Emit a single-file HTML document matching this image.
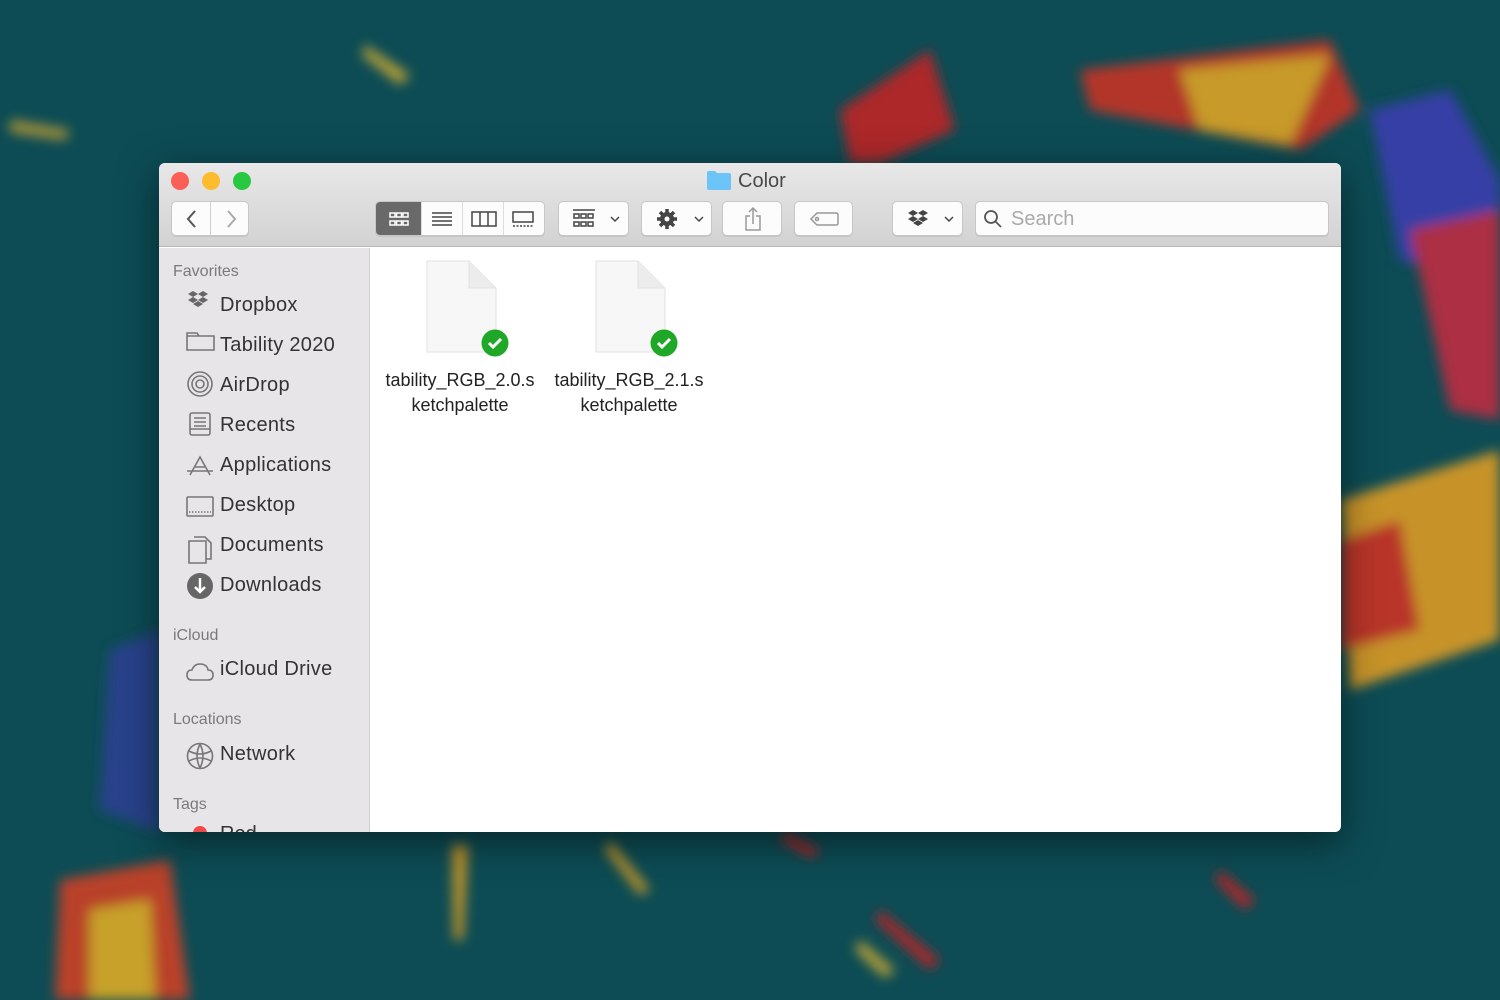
<!DOCTYPE html>
<html><head><meta charset="utf-8"><style>
*{margin:0;padding:0;box-sizing:border-box}
body{width:1500px;height:1000px;overflow:hidden;background:#0d4c55;font-family:"Liberation Sans",sans-serif;position:relative}
.win{position:absolute;left:159px;top:163px;width:1182px;height:669px;border-radius:6px;overflow:hidden;background:#fff;box-shadow:0 10px 40px rgba(0,0,0,.5)}
.tb{position:absolute;left:0;top:0;width:100%;height:84px;background:linear-gradient(#e9e8e9,#d3d2d3);border-bottom:1px solid #b8b7b8}
.dot{position:absolute;top:9px;width:18px;height:18px;border-radius:50%}
.btn{position:absolute;top:38px;height:35px;background:#fcfcfc;border:1px solid #c8c7c8;border-radius:5px;box-shadow:0 1px 0 rgba(0,0,0,.08)}
.btn svg{position:absolute;left:0;top:0}
.side{position:absolute;left:0;top:85px;width:211px;bottom:0;background:#e7e5e7;border-right:1px solid #d0cfd0}
.h{position:absolute;left:14px;font-size:16px;color:#7b797b}
.it{position:absolute;left:61px;font-size:20px;color:#333;letter-spacing:.3px}
.ic{position:absolute;left:27px}
.f{position:absolute;font-size:18px;color:#222;text-align:center;line-height:25px}
</style></head><body>
<svg width="1500" height="1000" style="position:absolute;left:0;top:0">
<defs><filter id="b"><feGaussianBlur stdDeviation="6"/></filter></defs>
<g filter="url(#b)" opacity=".85">
<path d="M1080 70 L1330 40 L1360 110 L1300 150 L1090 110Z" fill="#d03020"/>
<path d="M1180 70 L1330 55 L1290 145 L1200 130Z" fill="#e8a820"/>
<path d="M1370 110 L1450 90 L1500 180 L1500 280 L1400 260Z" fill="#3c3cb4"/>
<path d="M1410 230 L1500 210 L1500 420 L1450 410Z" fill="#c82a40"/>
<path d="M1341 500 L1500 450 L1500 640 L1350 690Z" fill="#e8a020"/>
<path d="M1341 540 L1400 520 L1420 630 L1341 650Z" fill="#d83020"/>
<path d="M840 110 L930 50 L955 130 L880 163 L850 163Z" fill="#c82020"/>
<path d="M60 880 L170 860 L190 1000 L55 1000Z" fill="#d84020"/>
<path d="M90 910 L150 900 L155 1000 L90 1000Z" fill="#e8b020"/>
<path d="M110 650 L159 630 L159 832 L100 810Z" fill="#3a3ab0" opacity=".7"/>
<path d="M452 845 L468 845 L463 940 L454 940Z" fill="#e0a020"/>
<path d="M880 910 L940 960 L930 970 L875 920Z" fill="#c82020"/>
<path d="M1220 870 L1255 900 L1245 910 L1215 880Z" fill="#c82020"/>
<path d="M365 45 L410 75 L400 85 L362 55Z" fill="#d8b030"/>
<path d="M10 120 L70 130 L65 140 L10 132Z" fill="#c8a030"/>
<path d="M610 840 L650 890 L640 895 L605 850Z" fill="#e0a020"/>
<path d="M785 832 L820 850 L812 858 L780 840Z" fill="#c82020"/>
<path d="M860 940 L895 970 L885 978 L855 950Z" fill="#d8b030"/>
</g></svg>
<div class="win">
<div class="tb">
<div class="dot" style="left:12px;background:#fc5f57"></div>
<div class="dot" style="left:43px;background:#fdbc2e"></div>
<div class="dot" style="left:74px;background:#28c840"></div>
<svg style="position:absolute;left:547px;top:7px" width="26" height="21"><path d="M1 3 Q1 1 3 1 H9 L11 3 H23 Q25 3 25 5 V19 Q25 20 23 20 H3 Q1 20 1 18Z" fill="#6dc5f7"/></svg>
<div style="position:absolute;left:579px;top:7px;font-size:20px;color:#4b4a4b">Color</div>
<div class="btn" style="left:12px;width:78px"><div style="position:absolute;left:38px;top:0;width:1px;height:100%;background:#d0d0d0"></div>
<svg width="78" height="35"><path d="M23 9 L16 17 L23 25" stroke="#555" stroke-width="2" fill="none"/><path d="M56 9 L63 17 L56 25" stroke="#aaa" stroke-width="2" fill="none"/></svg></div>
<div class="btn" style="left:216px;width:170px;overflow:hidden"><div style="position:absolute;left:0;top:0;width:45px;height:100%;background:#6a696a"></div>
<div style="position:absolute;left:45px;top:0;width:1px;height:100%;background:#ddd"></div><div style="position:absolute;left:86px;top:0;width:1px;height:100%;background:#ddd"></div><div style="position:absolute;left:127px;top:0;width:1px;height:100%;background:#ddd"></div>
<svg width="170" height="35" fill="none">
<g stroke="#fff" stroke-width="1.5"><rect x="14" y="11" width="5" height="4"/><rect x="20.5" y="11" width="5" height="4"/><rect x="27" y="11" width="5" height="4"/><rect x="14" y="19" width="5" height="4"/><rect x="20.5" y="19" width="5" height="4"/><rect x="27" y="19" width="5" height="4"/></g>
<g stroke="#444" stroke-width="1.5"><path d="M56 11H76M56 15H76M56 19H76M56 23H76"/><rect x="96" y="10" width="24" height="14"/><path d="M104 10V24M112 10V24"/><rect x="137" y="10" width="20" height="10"/><path d="M137 24H157" stroke-dasharray="2 1.5"/></g></svg></div>
<div class="btn" style="left:399px;width:71px"><svg width="71" height="35" fill="none" stroke="#444" stroke-width="1.5"><path d="M14 8H36"/><rect x="15" y="12" width="5" height="4"/><rect x="22" y="12" width="5" height="4"/><rect x="29" y="12" width="5" height="4"/><rect x="15" y="20" width="5" height="4"/><rect x="22" y="20" width="5" height="4"/><rect x="29" y="20" width="5" height="4"/><path d="M52 15L56 19L60 15"/></svg></div>
<div class="btn" style="left:482px;width:71px"><svg width="71" height="35"><circle cx="25" cy="17" r="7" fill="#444"/><g stroke="#444" stroke-width="3.5"><path d="M25 7V27M15 17H35M18 10L32 24M32 10L18 24"/></g><circle cx="25" cy="17" r="2.5" fill="#fcfcfc"/><path d="M53 15L57 19L61 15" stroke="#444" stroke-width="1.5" fill="none"/></svg></div>
<div class="btn" style="left:563px;width:60px"><svg width="60" height="35" fill="none" stroke="#999" stroke-width="1.5"><path d="M27 14H23V28H37V14H33M30 22V6M26 10L30 6L34 10"/></svg></div>
<div class="btn" style="left:635px;width:59px"><svg width="59" height="35" fill="none" stroke="#999" stroke-width="1.5"><path d="M22 11H41Q43 11 43 13V21Q43 23 41 23H22L16 17Z"/><circle cx="22" cy="17" r="1.5"/></svg></div>
<div class="btn" style="left:733px;width:71px"><svg width="71" height="35" fill="#444"><path d="M15 11L20 8L25 11L20 14Z M25 11L30 8L35 11L30 14Z M15 17L20 14L25 17L20 20Z M25 17L30 14L35 17L30 20Z M20 21L25 18L30 21L25 24Z"/><path d="M52 15L56 19L60 15" stroke="#444" stroke-width="1.5" fill="none"/></svg></div>
<div class="btn" style="left:816px;width:354px"><svg width="30" height="35" fill="none" stroke="#555" stroke-width="1.8"><circle cx="15" cy="15" r="6"/><path d="M19.5 19.5L25 25"/></svg><span style="position:absolute;left:35px;top:6px;font-size:20px;color:#aaa">Search</span></div>
</div>
<div class="side">
<div class="h" style="top:15px">Favorites</div>
<div class="it" style="top:46px">Dropbox</div>
<div class="it" style="top:86px">Tability 2020</div>
<div class="it" style="top:126px">AirDrop</div>
<div class="it" style="top:166px">Recents</div>
<div class="it" style="top:206px">Applications</div>
<div class="it" style="top:246px">Desktop</div>
<div class="it" style="top:286px">Documents</div>
<div class="it" style="top:326px">Downloads</div>
<div class="h" style="top:379px">iCloud</div>
<div class="it" style="top:410px">iCloud Drive</div>
<div class="h" style="top:463px">Locations</div>
<div class="it" style="top:495px">Network</div>
<div class="h" style="top:548px">Tags</div>
<div style="position:absolute;left:34px;top:578px;width:14px;height:14px;border-radius:50%;background:#f04848"></div>
<div style="position:absolute;left:61px;top:575px;font-size:20px;color:#333">Red</div>
<svg class="ic" style="top:39px" width="30" height="520" fill="none" stroke="#777" stroke-width="1.6">
<g fill="#666" stroke="none"><path d="M2 7L7 4L12 7L7 10Z M12 7L17 4L22 7L17 10Z M2 13L7 10L12 13L7 16Z M12 13L17 10L22 13L17 16Z M7 17L12 14L17 17L12 20Z"/></g>
<path d="M1 46V63H28V49H13L11 46Z M1 49H28"/>
<circle cx="14" cy="97" r="12"/><circle cx="14" cy="97" r="8"/><circle cx="14" cy="97" r="4"/>
<rect x="4" y="126" width="20" height="22" rx="2"/><path d="M8 131H20M8 135H20M8 139H20M4 142H24"/>
<path d="M4 188L14 170L24 188M9 180H19M1 184H27"/>
<rect x="1" y="210" width="26" height="19" rx="1"/><path d="M3 225H25" stroke-dasharray="1.5 1.5"/>
<path d="M3 254V276H20V254Z M8 250H19L25 256V272H20"/>
<circle cx="14" cy="299" r="13" fill="#666" stroke="none"/><path d="M14 291V305M9 300L14 305L19 300" stroke="#fff" stroke-width="2.5"/>
<path d="M6 393Q1 393 1 388Q1 383 6 383Q8 377 14 377Q21 377 22 383Q27 383 27 388Q27 393 22 393Z"/>
<circle cx="14" cy="469" r="12.5"/><path d="M3 464Q14 470 25 464M3 474Q14 468 25 474M14 457Q8 469 14 481M14 457Q20 469 14 481"/>
</svg>
</div>
<svg style="position:absolute;left:266px;top:97px" width="80" height="100"><path d="M2 1H44L71 28V92H2Z" fill="#f7f7f7" stroke="#e2e2e2"/><path d="M44 1V28H71" fill="#ececec" stroke="#e2e2e2"/></svg>
<svg style="position:absolute;left:435px;top:97px" width="80" height="100"><path d="M2 1H44L71 28V92H2Z" fill="#f7f7f7" stroke="#e2e2e2"/><path d="M44 1V28H71" fill="#ececec" stroke="#e2e2e2"/></svg>
<svg style="position:absolute;left:322px;top:166px" width="28" height="28"><circle cx="14" cy="14" r="13.5" fill="#1fa827"/><path d="M8 14L12 18L20 10" stroke="#fff" stroke-width="3" fill="none"/></svg>
<svg style="position:absolute;left:491px;top:166px" width="28" height="28"><circle cx="14" cy="14" r="13.5" fill="#1fa827"/><path d="M8 14L12 18L20 10" stroke="#fff" stroke-width="3" fill="none"/></svg>
<div class="f" style="left:220px;top:205px;width:162px">tability_RGB_2.0.s<br>ketchpalette</div>
<div class="f" style="left:389px;top:205px;width:162px">tability_RGB_2.1.s<br>ketchpalette</div>
</div>
</body></html>
